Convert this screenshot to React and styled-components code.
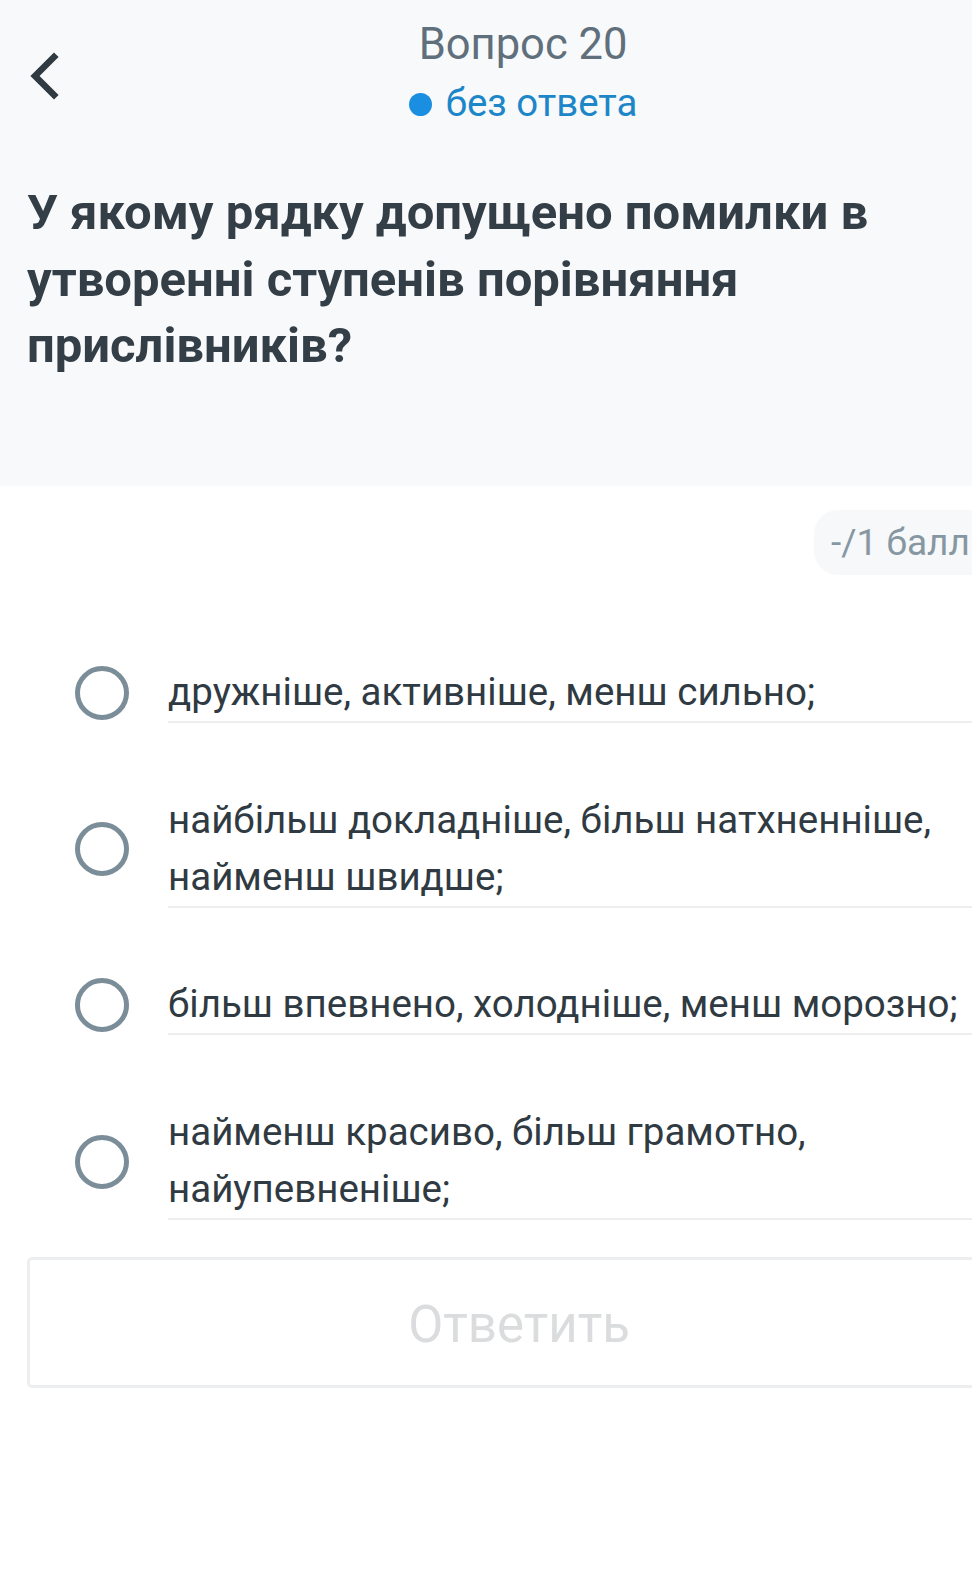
import React from "react";
import styled, { createGlobalStyle } from "styled-components";

const Global = createGlobalStyle`
  html, body { margin: 0; padding: 0; background: #ffffff; overflow: hidden; }
  body { font-family: Roboto, "Noto Sans", "Liberation Sans", sans-serif; }
  * { box-sizing: border-box; }
`;

const Page = styled.div`
  width: 1038px;
  min-height: 1580px;
  background: #ffffff;
`;

const Header = styled.header`
  background: #f7f9fb;
  height: 486px;
  padding: 0 27px;
  display: flex;
  flex-direction: column;
`;

const TopBar = styled.div`
  position: relative;
  display: flex;
  flex-direction: column;
  align-items: center;
  padding: 18px 0 0 8px;
`;

const BackButton = styled.button`
  position: absolute;
  left: 0;
  top: 50px;
  width: 40px;
  height: 52px;
  border: 0;
  padding: 0;
  background: transparent;
  display: flex;
  align-items: center;
`;

const Title = styled.div`
  font-size: 43.5px;
  line-height: 54px;
  color: #5f6f7b;
  font-weight: 400;
`;

const Status = styled.div`
  display: flex;
  align-items: center;
  gap: 14px;
  font-size: 38.4px;
  line-height: 50px;
  color: #1c86c8;
  margin-top: 6px;
`;

const Dot = styled.span`
  width: 23px;
  height: 23px;
  border-radius: 50%;
  background: #1a8ee0;
  margin-top: 3px;
`;

const Question = styled.h1`
  margin: 52px 0 0;
  font-size: 49px;
  line-height: 66.5px;
  font-weight: 700;
  color: #333e47;
  max-width: 900px;
`;

const ScoreRow = styled.div`
  display: flex;
  justify-content: flex-end;
  padding-top: 24px;
`;

const ScorePill = styled.div`
  background: #f6f8fa;
  border-radius: 24px;
  height: 65px;
  width: 230px;
  padding: 0 0 0 17px;
  display: flex;
  align-items: center;
  font-size: 37px;
  color: #8797a2;
  transform: translateX(6px);
`;

const Options = styled.div`
  display: flex;
  flex-direction: column;
  gap: 67.7px;
  margin-top: 88px;
  padding: 0 27px 0 75px;
`;

const Option = styled.label`
  display: flex;
  align-items: center;
  gap: 39px;
`;

const Radio = styled.span`
  flex: none;
  width: 54px;
  height: 54px;
  border-radius: 50%;
  border: 5px solid #7b8d98;
`;

const OptionText = styled.div`
  flex: 1;
  font-size: 38.5px;
  line-height: 57px;
  color: #2f3a42;
  padding-bottom: 1px;
  border-bottom: 2px solid #eceef0;
  margin-right: -27px;
  padding-right: 27px;
`;

const Footer = styled.div`
  padding: 37px 0 0 27px;
`;

const AnswerButton = styled.button`
  width: 984px;
  height: 131px;
  border: 3px solid #eceef0;
  border-radius: 5px;
  background: #ffffff;
  font-family: Roboto, "Noto Sans", sans-serif;
  font-size: 51px;
  color: #dadcde;
  padding: 4px 0 0;
`;

const options = [
  "дружніше, активніше, менш сильно;",
  "найбільш докладніше, більш натхненніше, найменш швидше;",
  "більш впевнено, холодніше, менш морозно;",
  "найменш красиво, більш грамотно, найупевненіше;",
];

export default function App() {
  return (
    <Page>
      <Global />
      <Header>
        <TopBar>
          <BackButton aria-label="Назад">
            <svg width="34" height="50" viewBox="0 0 34 50">
              <path d="M27 6 L8 25 L27 44" fill="none" stroke="#2f3a42" strokeWidth="6.5" strokeLinecap="square" />
            </svg>
          </BackButton>
          <Title>Вопрос 20</Title>
          <Status>
            <Dot />
            без ответа
          </Status>
        </TopBar>
        <Question>У якому рядку допущено помилки в утворенні ступенів порівняння прислівників?</Question>
      </Header>
      <ScoreRow>
        <ScorePill>-/1 балл</ScorePill>
      </ScoreRow>
      <Options>
        {options.map((text, i) => (
          <Option key={i}>
            <Radio />
            <OptionText>{text}</OptionText>
          </Option>
        ))}
      </Options>
      <Footer>
        <AnswerButton>Ответить</AnswerButton>
      </Footer>
    </Page>
  );
}
